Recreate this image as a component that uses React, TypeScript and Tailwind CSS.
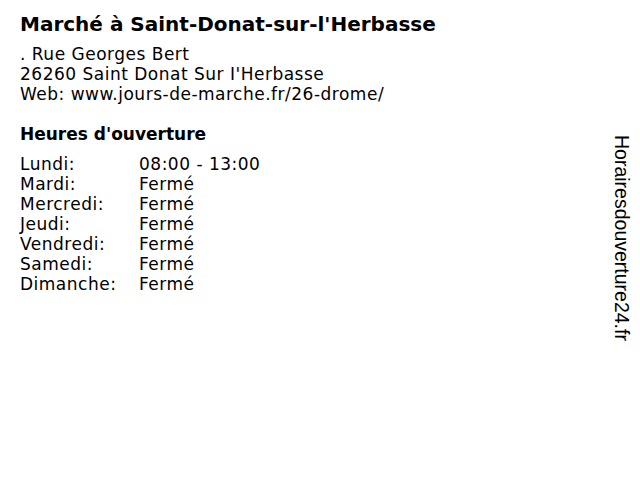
const hours = [
  { day: "Lundi:", time: "08:00 - 13:00" },
  { day: "Mardi:", time: "Fermé" },
  { day: "Mercredi:", time: "Fermé" },
  { day: "Jeudi:", time: "Fermé" },
  { day: "Vendredi:", time: "Fermé" },
  { day: "Samedi:", time: "Fermé" },
  { day: "Dimanche:", time: "Fermé" },
];

export default function App() {
  return (
    <div className="relative w-[640px] h-[480px] bg-white text-black font-['DejaVu_Sans',sans-serif] overflow-hidden">
      <div className="px-5 pt-[11px]">
        <h1 className="text-[20px] leading-[26px] font-bold">Marché à Saint-Donat-sur-l'Herbasse</h1>
        <div className="mt-[7px] text-[17px] leading-[20px] tracking-[0.5px]">
          <div>. Rue Georges Bert</div>
          <div>26260 Saint Donat Sur I'Herbasse</div>
          <div>Web: www.jours-de-marche.fr/26-drome/</div>
        </div>
        <h2 className="mt-[20px] text-[17px] leading-[20px] font-bold">Heures d'ouverture</h2>
        <div className="mt-[10px] text-[17px] leading-[20px] tracking-[0.5px]">
          {hours.map((h) => (
            <div key={h.day} className="flex">
              <span className="w-[119px] shrink-0">{h.day}</span>
              <span>{h.time}</span>
            </div>
          ))}
        </div>
      </div>
      <div className="absolute left-[611px] top-[135px] origin-top-left rotate-90 translate-x-[22px] whitespace-nowrap text-[19.5px] leading-[22px] font-['Liberation_Sans',sans-serif]">
        Horairesdouverture24.fr
      </div>
    </div>
  );
}
